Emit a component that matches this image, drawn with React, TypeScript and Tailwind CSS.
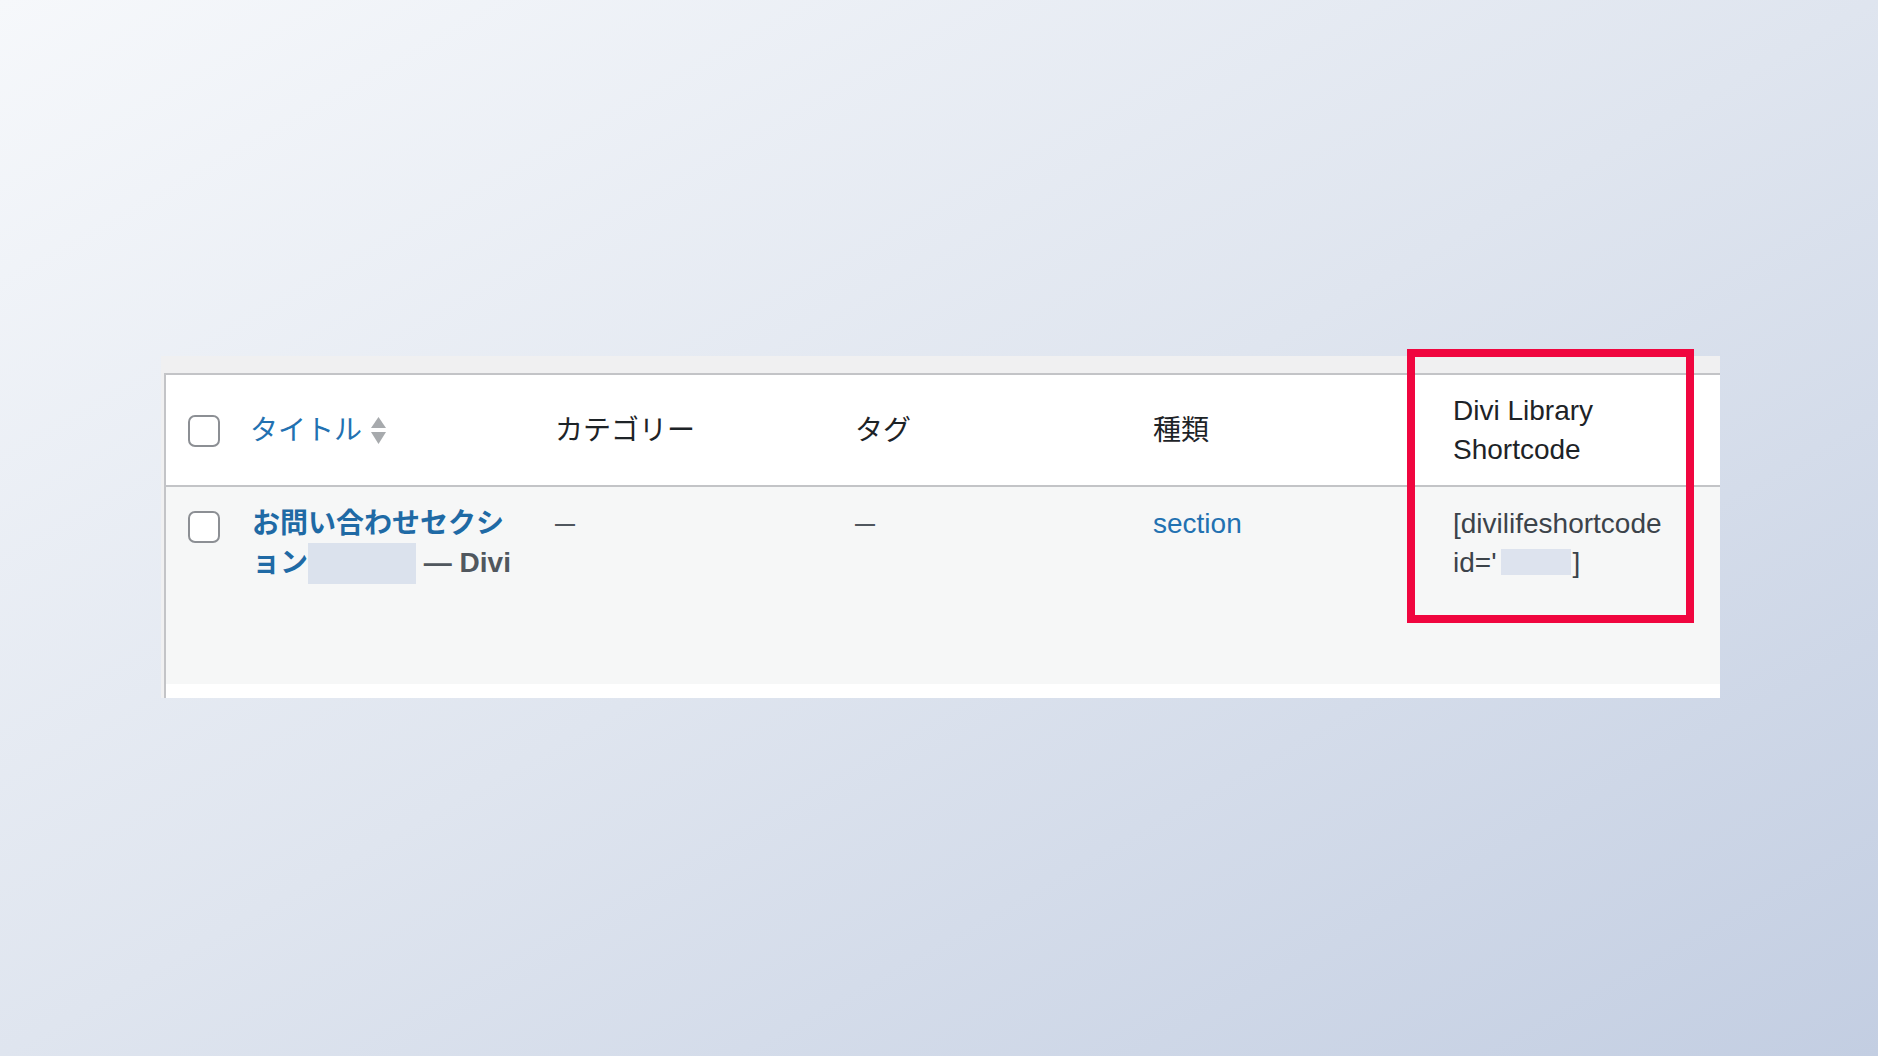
import React from "react";

const cols = "grid grid-cols-[86px_303px_300px_298px_300px_1fr]";

const Checkbox = ({ className = "" }: { className?: string }) => (
  <span
    className={`block w-8 h-8 border-2 border-[#8c8f94] rounded-[7px] bg-white ${className}`}
  />
);

const SortIcon = () => (
  <svg width="15" height="27" viewBox="0 0 15 27" className="ml-[9px] mt-[1px]">
    <polygon points="7.5,0 15,11 0,11" fill="#a7aaad" />
    <polygon points="0,15 15,15 7.5,27" fill="#a7aaad" />
  </svg>
);

const App = () => {
  return (
    <div className="min-h-[1056px] w-full bg-linear-to-br from-[#f6f8fb] via-[#dfe5ef] to-[#c3cee2] pt-[356px] pl-[161px] font-['Liberation_Sans','Noto_Sans_CJK_JP',sans-serif] text-[28px] leading-[39px]">
      <div className="relative w-[1559px] bg-[#f0f0f1] pt-[17px] pl-[3px]">
        <div className="border-l-2 border-t-2 border-[#c3c4c7] bg-white">
          {/* header */}
          <div className={`${cols} h-[112px] items-center border-b-2 border-[#c3c4c7] text-[#1d2327]`}>
            <div className="pl-[22px] pt-[2px]">
              <Checkbox />
            </div>
            <div className="flex items-center -ml-[2px] text-[#2271b1]">
              <span>タイトル</span>
              <SortIcon />
            </div>
            <div>カテゴリー</div>
            <div>タグ</div>
            <div>種類</div>
            <div className="w-[230px]">Divi Library Shortcode</div>
          </div>

          {/* row */}
          <div className={`${cols} h-[197px] items-start bg-[#f6f7f7] pt-[17px]`}>
            <div className="pl-[22px] pt-[7px]">
              <Checkbox />
            </div>
            <div className="w-[290px] font-bold text-[#1f6aa5]">
              お問い合わせセクシ
              <br />
              ョン
              <span className="inline-block align-top w-[108px] h-[41px] bg-[#dbe2ed]" />
              <span className="text-[#50575e]"> — Divi</span>
            </div>
            <div className="text-[20px] font-bold text-[#50575e]">—</div>
            <div className="text-[20px] font-bold text-[#50575e]">—</div>
            <div className="text-[#2271b1]">section</div>
            <div className="w-[230px] text-[#3c434a]">
              <div>[divilifeshortcode</div>
              <div className="flex items-end h-[39px]">
                <span>id='</span>
                <span className="w-[70px] h-[26px] ml-[4px] mr-[2px] mb-[7px] bg-[#dde3ee]" />
                <span>]</span>
              </div>
            </div>
          </div>
          <div className="h-[14px] bg-white" />
        </div>

        {/* highlight */}
        <div className="absolute left-[1246px] top-[-7px] w-[287px] h-[274px] border-8 border-[#f0063f]" />
      </div>
    </div>
  );
};

export default App;
